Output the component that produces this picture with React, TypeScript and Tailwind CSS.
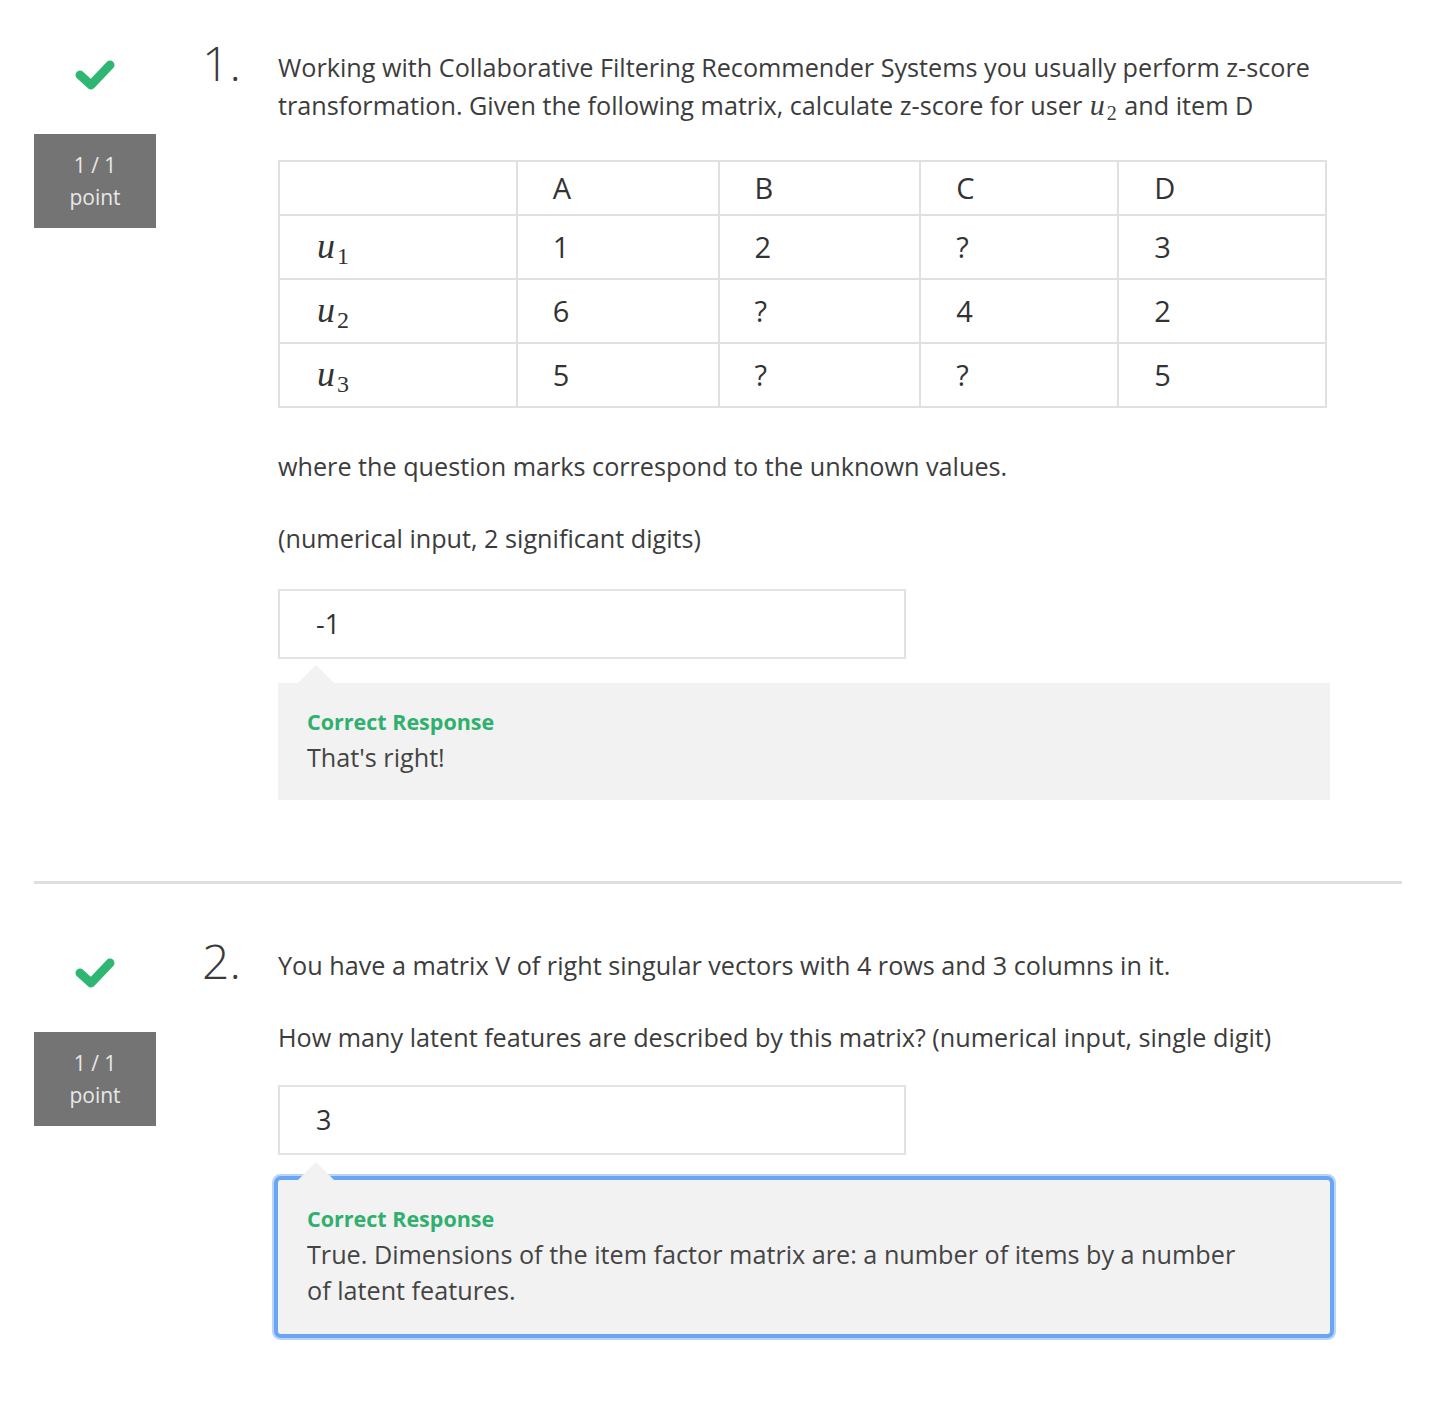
import React from "react";

type Row = { user: string; values: string[] };

const rows: Row[] = [
  { user: "1", values: ["1", "2", "?", "3"] },
  { user: "2", values: ["6", "?", "4", "2"] },
  { user: "3", values: ["5", "?", "?", "5"] },
];

const colWidths = ["w-[238px]", "w-[202px]", "w-[202px]", "w-[198px]", "w-[208px]"];

function MathU({ sub, big = false }: { sub: string; big?: boolean }) {
  return (
    <span className="font-['Liberation_Serif',serif] whitespace-nowrap leading-none inline-block mx-[1px]">
      <span className={big ? "italic text-[36px] mr-[2px]" : "italic text-[30px] mr-[2px]"}>u</span>
      <span className={big ? "text-[24px] relative top-[6px]" : "text-[20px] relative top-[5px]"}>{sub}</span>
    </span>
  );
}

function CheckIcon() {
  return (
    <svg width="42" height="34" viewBox="0 0 42 34">
      <polyline
        points="6,17 17,27 36,7"
        fill="none"
        stroke="#2fb673"
        strokeWidth="9"
        strokeLinecap="round"
        strokeLinejoin="round"
      />
    </svg>
  );
}

function Score() {
  return (
    <div className="flex flex-col items-center">
      <div className="pt-[10px]">
        <CheckIcon />
      </div>
      <div className="mt-[42px] w-[122px] h-[94px] bg-[#747474] text-[#e8e8e8] text-[21px] leading-[32px] flex flex-col items-center justify-center">
        <span>1 / 1</span>
        <span>point</span>
      </div>
    </div>
  );
}

function Feedback({ lines, focused = false }: { lines: React.ReactNode; focused?: boolean }) {
  return (
    <div className="relative">
      <div className="absolute left-[20px] top-[-18px] w-0 h-0 border-l-[18px] border-r-[18px] border-b-[18px] border-l-transparent border-r-transparent border-b-[#f2f2f2]" />
      <div
        className={
          focused
            ? "bg-[#f2f2f2] pl-[29px] pr-[80px] pt-[21px] pb-[26px] rounded-[3px] shadow-[0_0_0_4px_#6aa5f4,0_0_0_6px_#bad5fb]"
            : "bg-[#f2f2f2] pl-[29px] pr-[80px] pt-[21px] pb-[25px]"
        }
      >
        <div className="text-[#2fb06e] font-bold text-[21.5px] leading-[35px]">Correct Response</div>
        <div className="text-[25.2px] leading-[36px] text-[#444]">{lines}</div>
      </div>
    </div>
  );
}

function AnswerBox({ value }: { value: string }) {
  return (
    <div className="w-[628px] h-[70px] border-2 border-[#e2e2e2] flex items-center pl-[36px] text-[27px] text-[#333]">
      {value}
    </div>
  );
}

function Question({ num, children }: { num: string; children: React.ReactNode }) {
  return (
    <div className="flex">
      <div className="w-[122px] shrink-0">
        <Score />
      </div>
      <div className="w-[74px] ml-[46px] mr-[2px] shrink-0 text-[48px] font-light leading-[48px] text-[#3a3a3a] -mt-[9px]">
        {num}
      </div>
      <div className="w-[1052px]">{children}</div>
    </div>
  );
}

export default function App() {
  return (
    <div className="bg-white min-h-[1404px] font-['Open_Sans',sans-serif] text-[#3c3c3c] px-[34px] pt-[48px]">
      <Question num="1.">
        <p className="text-[25.2px] leading-[38px]">
          Working with Collaborative Filtering Recommender Systems you usually perform z-score
          transformation. Given the following matrix, calculate z-score for user <MathU sub="2" /> and item D
        </p>
        <table className="mt-[36px] border-collapse border-2 border-[#e0e0e0] w-[1049px] text-[29px] text-[#333]">
          <thead>
            <tr className="h-[54px]">
              {["", "A", "B", "C", "D"].map((h, i) => (
                <th key={i} className={`${colWidths[i]} border-2 border-[#e0e0e0] text-left font-normal pl-[35px]`}>
                  {h}
                </th>
              ))}
            </tr>
          </thead>
          <tbody>
            {rows.map((r) => (
              <tr key={r.user} className="h-[64px]">
                <td className="border-2 border-[#e0e0e0] pl-[36px]">
                  <MathU sub={r.user} big />
                </td>
                {r.values.map((v, i) => (
                  <td key={i} className="border-2 border-[#e0e0e0] pl-[35px]">
                    {v}
                  </td>
                ))}
              </tr>
            ))}
          </tbody>
        </table>
        <p className="mt-[39px] text-[25.2px] leading-[38px]">where the question marks correspond to the unknown values.</p>
        <p className="mt-[34px] text-[25.2px] leading-[38px]">(numerical input, 2 significant digits)</p>
        <div className="mt-[32px]">
          <AnswerBox value="-1" />
        </div>
        <div className="mt-[24px] w-[1052px]">
          <Feedback lines="That's right!" />
        </div>
      </Question>

      <div className="mt-[81px] mb-[62px] h-[3px] bg-[#dedede] w-[1368px]" />

      <Question num="2.">
        <p className="text-[25.2px] leading-[38px]">
          You have a matrix V of right singular vectors with 4 rows and 3 columns in it.
        </p>
        <p className="mt-[34px] text-[25.2px] leading-[38px]">
          How many latent features are described by this matrix? (numerical input, single digit)
        </p>
        <div className="mt-[29px]">
          <AnswerBox value="3" />
        </div>
        <div className="mt-[25px] w-[1052px]">
          <Feedback
            focused
            lines="True. Dimensions of the item factor matrix are: a number of items by a number of latent features."
          />
        </div>
      </Question>
    </div>
  );
}
